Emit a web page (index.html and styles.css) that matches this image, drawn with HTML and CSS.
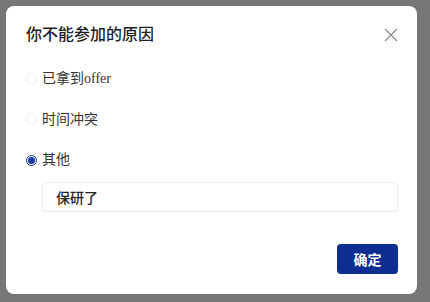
FILE: index.html
```html
<!DOCTYPE html>
<html lang="zh">
<head>
<meta charset="utf-8">
<link rel="stylesheet" href="styles.css">
</head>
<body>
<div class="dialog">
  <div class="header">
    <div class="title">你不能参加的原因</div>
    <svg class="close" width="14" height="14" viewBox="0 0 14 14"><path d="M1 1L13 13M13 1L1 13" stroke="#8c8c8c" stroke-width="1.3" fill="none"/></svg>
  </div>
  <div class="options">
    <div class="row"><span class="radio"></span><span class="label">已拿到offer</span></div>
    <div class="row"><span class="radio"></span><span class="label">时间冲突</span></div>
    <div class="row"><span class="radio checked"></span><span class="label">其他</span></div>
  </div>
  <div class="input">保研了</div>
  <div class="footer"><div class="btn">确定</div></div>
</div>
</body>
</html>
```
FILE: styles.css
```css
html, body { margin: 0; padding: 0; }
body {
  background: #767676;
  padding: 6px;
  width: 430px;
  height: 302px;
  box-sizing: border-box;
  font-family: "Liberation Serif", "Noto Sans CJK SC", serif;
}
.dialog {
  width: 411px;
  height: 288px;
  background: #fff;
  border-radius: 8px;
  box-sizing: border-box;
  padding: 16px 19px 20px 20px;
}
.header {
  display: flex;
  justify-content: space-between;
  align-items: center;
  height: 22px;
}
.title {
  font-family: "Noto Sans CJK SC", sans-serif;
  font-size: 16px;
  font-weight: 500;
  color: #1f1f1f;
  line-height: 22px;
}
.close { margin-top: 4px; }
.options {
  display: flex;
  flex-direction: column;
  gap: 20.5px;
  margin-top: 25px;
}
.row {
  display: flex;
  align-items: center;
  height: 20px;
}
.radio {
  width: 11px;
  height: 11px;
  border-radius: 50%;
  border: 1px solid #ececec;
  box-sizing: border-box;
  margin-right: 5px;
  background: #fff;
  position: relative;
}
.radio.checked {
  border: 1px solid #12308f;
  background: #fff;
}
.radio.checked::after {
  content: "";
  position: absolute;
  left: 1px; top: 1px;
  width: 7px; height: 7px;
  border-radius: 50%;
  background: #1d3c9e;
}
.label {
  font-size: 14px;
  color: #333;
  line-height: 20px;
}
.input {
  margin: 12px 0 0 16px;
  height: 30px;
  border: 1px solid #ececec;
  border-radius: 3px;
  box-sizing: border-box;
  padding-left: 13px;
  font-family: "Noto Sans CJK SC", sans-serif;
  font-size: 14px;
  font-weight: 500;
  color: #222;
  line-height: 28px;
}
.footer {
  display: flex;
  justify-content: flex-end;
  margin-top: 32px;
}
.btn {
  width: 61px;
  height: 30px;
  background: #0e2f91;
  border-radius: 4px;
  color: #fff;
  font-family: "Noto Sans CJK SC", sans-serif;
  font-size: 14px;
  font-weight: 700;
  line-height: 30px;
  text-align: center;
}
```
